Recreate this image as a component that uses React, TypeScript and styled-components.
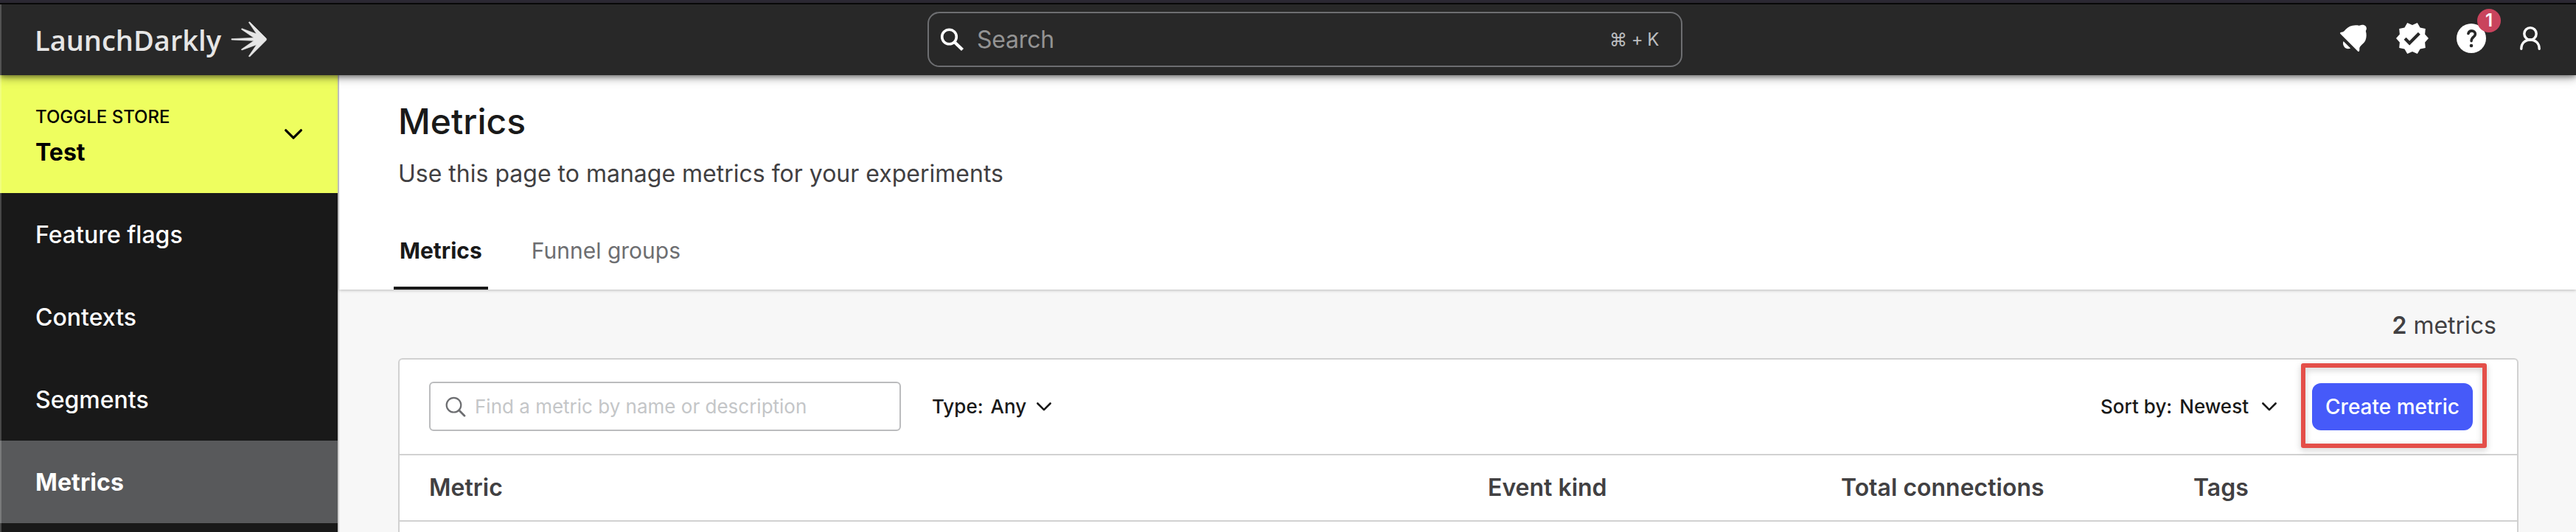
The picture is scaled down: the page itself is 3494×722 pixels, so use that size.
import React from 'react';
import styled, { createGlobalStyle } from 'styled-components';
import { MdVerified } from 'react-icons/md';

const GlobalStyle = createGlobalStyle`
  *, *::before, *::after { box-sizing: border-box; }
  body { margin: 0; overflow: hidden; font-family: Inter, "Liberation Sans", sans-serif; color: #191919; }
`;

const Page = styled.div`
  position: relative;
  display: flex;
  flex-direction: column;
  height: 722px;
  overflow: hidden;
  background: #f7f7f7;

  &::after {
    content: '';
    position: absolute;
    inset: 6px auto 0 0;
    width: 2px;
    background: rgba(255, 255, 255, 0.2);
    z-index: 3;
  }
`;

const WindowEdge = styled.div`
  flex: none;
  height: 6px;
  background: #2d2a35;
  border-bottom: 2px solid #0a0a0a;
`;

const Header = styled.header`
  position: relative;
  z-index: 2;
  flex: none;
  display: flex;
  align-items: center;
  height: 96px;
  padding: 0 38px 4px 47px;
  background: #282828;
  box-shadow: 0 2px 6px rgba(0, 0, 0, 0.35), 0 4px 12px rgba(0, 0, 0, 0.35);
`;

const Brand = styled.div`
  display: flex;
  align-items: center;
  gap: 13px;
  width: 1211px;
  padding-top: 3px;
  color: #e6e6e6;
`;

const BrandName = styled.span`
  font: 600 38px/50px "Open Sans", sans-serif;
`;

const GlobalSearch = styled.div`
  display: flex;
  align-items: center;
  width: 1024px;
  height: 75px;
  margin-top: 3px;
  padding: 0 30px 0 15px;
  border: 2px solid #6d6e71;
  border-radius: 16px;
`;

const GlobalSearchText = styled.span`
  flex: 1;
  margin-left: 16px;
  font-size: 32px;
  line-height: 40px;
  letter-spacing: -0.2px;
  color: #939393;
`;

const Shortcut = styled.span`
  padding-top: 1px;
  font-size: 24px;
  line-height: 30px;
  letter-spacing: -0.5px;
  color: #bcbec0;
`;

const HeaderActions = styled.nav`
  display: flex;
  gap: 32px;
  margin-left: auto;
  color: #fff;
`;

const IconButton = styled.span`
  position: relative;
  display: flex;
  width: 48px;
  height: 48px;
`;

const Badge = styled.span`
  position: absolute;
  top: -16px;
  left: 32px;
  width: 32px;
  height: 32px;
  border-radius: 50%;
  background: #c9445d;
  font-size: 24px;
  font-weight: 600;
  line-height: 31px;
  text-align: center;
`;

const Body = styled.div`
  flex: 1;
  display: flex;
  min-height: 0;
`;

const Sidebar = styled.aside`
  flex: none;
  width: 460px;
  border-right: 2px solid #cfcfcf;
  background: #191919;
`;

const ProjectPicker = styled.div`
  display: flex;
  align-items: center;
  justify-content: space-between;
  height: 160px;
  padding: 0 48px;
  background: #eefe5f;
  color: #000;
`;

const ProjectName = styled.div`
  padding-top: 5px;
  font-size: 24px;
  font-weight: 500;
  line-height: 32px;
`;

const EnvironmentName = styled.div`
  margin-top: 12px;
  font-size: 32px;
  font-weight: 700;
  line-height: 40px;
`;

const NavItem = styled.a<{ $active?: boolean }>`
  display: flex;
  align-items: center;
  height: 112px;
  padding-left: 48px;
  font-size: 32px;
  font-weight: ${p => (p.$active ? 700 : 500)};
  letter-spacing: ${p => (p.$active ? '0.1px' : '0')};
  color: #fff;
  background: ${p => (p.$active ? '#58595b' : 'transparent')};
`;

const Main = styled.main`
  flex: 1;
  min-width: 0;
`;

const PageHeader = styled.div`
  height: 291px;
  padding: 33px 74px 0;
  background: #fff;
  box-shadow: 0 1px 4px rgba(0, 0, 0, 0.25);
`;

const Title = styled.h1`
  margin: 0 0 0 6px;
  font-size: 48px;
  font-weight: 500;
  line-height: 60px;
`;

const Subtitle = styled.p`
  margin: 21px 0 0 6px;
  font-size: 32px;
  line-height: 40px;
  color: #414042;
`;

const Tabs = styled.div`
  display: flex;
  gap: 51px;
  height: 102px;
  margin-top: 35px;
`;

const Tab = styled.a<{ $active?: boolean }>`
  padding: 29px 8px 0;
  font-size: 30px;
  font-weight: ${p => (p.$active ? 700 : 400)};
  line-height: 40px;
  color: ${p => (p.$active ? '#191919' : '#6d6e71')};
  border-bottom: ${p => (p.$active ? '4px solid #191919' : 'none')};
`;

const Count = styled.p`
  margin: 29px 108px 24px 0;
  font-size: 32px;
  line-height: 40px;
  text-align: right;
  color: #414042;

  strong { font-weight: 600; }
`;

const Card = styled.section`
  height: 300px;
  margin: 0 78px 0 80px;
  border: 2px solid #d1d1d1;
  border-radius: 6px;
  background: #fff;
`;

const Toolbar = styled.div`
  display: flex;
  align-items: center;
  height: 130px;
  padding: 0 60px 0 40px;
  border-bottom: 2px solid #d1d1d1;
`;

const FilterInput = styled.div`
  display: flex;
  align-items: center;
  gap: 12px;
  width: 640px;
  height: 67px;
  margin-bottom: 1px;
  padding-left: 20px;
  border: 2px solid #bbbcbe;
  border-radius: 6px;
  font-size: 26px;
  line-height: 34px;
  color: #c4c6c8;
`;

const Dropdown = styled.div<{ $gap: number }>`
  display: flex;
  align-items: center;
  font-size: 26px;
  font-weight: 500;
  line-height: 34px;

  span + span { margin-left: 10px; }
  svg { margin-left: ${p => p.$gap}px; }
`;

const TypeFilter = styled(Dropdown)`
  margin-left: 42px;
`;

const SortFilter = styled(Dropdown)`
  margin-left: auto;
`;

const CreateArea = styled.div`
  position: relative;
  margin-left: 48px;
`;

const CreateButton = styled.button`
  display: block;
  width: 218px;
  height: 64px;
  padding: 0;
  border: 0;
  border-radius: 12px;
  background: #465af9;
  color: #fff;
  font: 500 28px/64px Inter, sans-serif;
`;

const Highlight = styled.div`
  position: absolute;
  top: -27px;
  left: -15px;
  width: 252px;
  height: 115px;
  border: 6px solid #e44f49;
  border-radius: 3px;
  filter: drop-shadow(0 3px 4px rgba(0, 0, 0, 0.2));
`;

const TableHead = styled.div`
  display: grid;
  grid-template-columns: 1436px 479px 478px 1fr;
  align-items: center;
  height: 90px;
  padding: 0 0 2px 40px;
  border-bottom: 2px solid #d1d1d1;
  font-size: 32px;
  font-weight: 600;
  color: #414042;
`;

const Chevron = ({ width, stroke }: { width: number; stroke: number }) => (
  <svg width={width} height={width * 0.6} viewBox="0 0 20 12" fill="none" stroke="currentColor"
    strokeWidth={(stroke * 20) / width} strokeLinecap="round" strokeLinejoin="round">
    <path d="M1.4 1.5 10 10.2 18.6 1.5" />
  </svg>
);

const BrandMark = () => (
  <svg width="49" height="49" viewBox="0 0 147 147" fill="currentColor" stroke="currentColor" strokeWidth="2" strokeLinejoin="round">
    <path d="M77 2 L144 69 Q147 73 144 77 L77 144 L73 142 L105 95 L45 117 L43 114 L94 79 L3 75 L3 71 L94 67 L43 32 L45 29 L105 51 L73 4Z" />
  </svg>
);

const BellIcon = () => (
  <svg width="48" height="48" viewBox="0 0 48 48" fill="currentColor">
    <path d="M6.2 16.6 C6.8 15.7 7.8 16 9 15.6 C11 15 12 13.6 13.5 12 C17 8 22 5.8 28.5 6.2 C30.5 6.3 31.6 6.8 32.8 6.6 C34 6.1 35 5.7 36.5 5.7 C40 5.7 42 8 41.9 11 C41.8 12.6 40.8 13.2 40.9 14.6 C42 18 42 23 40.5 26.5 C38.6 31.5 33.2 33.2 32.3 37.5 C32.2 39.3 32.8 40.8 31.4 42 C30.8 42.3 30.4 42 30 41.5 L6.5 18 C6 17.5 5.9 17 6.2 16.6Z" />
    <path d="M10.6 28 L20.2 37.4 C17.2 38.8 13.6 38.4 11.6 35.5 C9.8 33 9.6 30 10.6 28Z" />
  </svg>
);

const HelpIcon = () => (
  <svg width="48" height="48" viewBox="0 0 48 48" fill="none">
    <circle cx="24" cy="24" r="20" fill="currentColor" />
    <path d="M19.9 17.4 C20.6 15 22.3 13.9 24.6 13.9 C27.3 13.9 29.4 15.5 29.4 18.2 C29.4 22.3 24.1 22.3 24.1 27.6" stroke="#282828" strokeWidth="3.6" strokeLinecap="round" />
    <circle cx="24" cy="34" r="2.3" fill="#282828" />
  </svg>
);

const UserIcon = () => (
  <svg width="48" height="48" viewBox="0 0 48 48" fill="none" stroke="currentColor" strokeWidth="3.4" strokeLinecap="round">
    <circle cx="24" cy="17.8" r="8.2" />
    <path d="M11.8 38.3 C11.8 31 16.6 26 24 26 C31.4 26 36.2 31 36.2 38.3" />
  </svg>
);

const GlobalSearchIcon = () => (
  <svg width="34" height="34" viewBox="0 0 34 34" fill="none" stroke="#fff">
    <circle cx="12.5" cy="13" r="9.8" strokeWidth="3.6" />
    <path d="M19.5 20 L30.5 30.5" strokeWidth="4.4" />
  </svg>
);

const FilterSearchIcon = () => (
  <svg width="28" height="28" viewBox="0 0 28 28" fill="none" stroke="#6d6e71" strokeLinecap="round">
    <circle cx="11.5" cy="11.7" r="9.8" strokeWidth="2.2" />
    <path d="M18.6 18.8 L26 26.2" strokeWidth="2.8" />
  </svg>
);

const navItems = ['Feature flags', 'Contexts', 'Segments', 'Metrics'];
const columns = ['Metric', 'Event kind', 'Total connections', 'Tags'];

export default function App() {
  return (
    <>
      <GlobalStyle />
      <Page>
        <WindowEdge />
        <Header>
          <Brand>
            <BrandName>LaunchDarkly</BrandName>
            <BrandMark />
          </Brand>
          <GlobalSearch>
            <GlobalSearchIcon />
            <GlobalSearchText>Search</GlobalSearchText>
            <Shortcut>⌘ + K</Shortcut>
          </GlobalSearch>
          <HeaderActions>
            <IconButton><BellIcon /></IconButton>
            <IconButton><MdVerified size={48} /></IconButton>
            <IconButton><HelpIcon /><Badge>1</Badge></IconButton>
            <IconButton><UserIcon /></IconButton>
          </HeaderActions>
        </Header>
        <Body>
          <Sidebar>
            <ProjectPicker>
              <div>
                <ProjectName>TOGGLE STORE</ProjectName>
                <EnvironmentName>Test</EnvironmentName>
              </div>
              <Chevron width={24} stroke={3.2} />
            </ProjectPicker>
            {navItems.map(item => (
              <NavItem key={item} $active={item === 'Metrics'}>{item}</NavItem>
            ))}
          </Sidebar>
          <Main>
            <PageHeader>
              <Title>Metrics</Title>
              <Subtitle>Use this page to manage metrics for your experiments</Subtitle>
              <Tabs>
                <Tab $active>Metrics</Tab>
                <Tab>Funnel groups</Tab>
              </Tabs>
            </PageHeader>
            <Count><strong>2</strong> metrics</Count>
            <Card>
              <Toolbar>
                <FilterInput>
                  <FilterSearchIcon />
                  Find a metric by name or description
                </FilterInput>
                <TypeFilter $gap={14}>
                  <span>Type:</span>
                  <span>Any</span>
                  <Chevron width={20} stroke={2.6} />
                </TypeFilter>
                <SortFilter $gap={18}>
                  <span>Sort by:</span>
                  <span>Newest</span>
                  <Chevron width={20} stroke={2.6} />
                </SortFilter>
                <CreateArea>
                  <CreateButton>Create metric</CreateButton>
                  <Highlight />
                </CreateArea>
              </Toolbar>
              <TableHead>
                {columns.map(c => <span key={c}>{c}</span>)}
              </TableHead>
            </Card>
          </Main>
        </Body>
      </Page>
    </>
  );
}
